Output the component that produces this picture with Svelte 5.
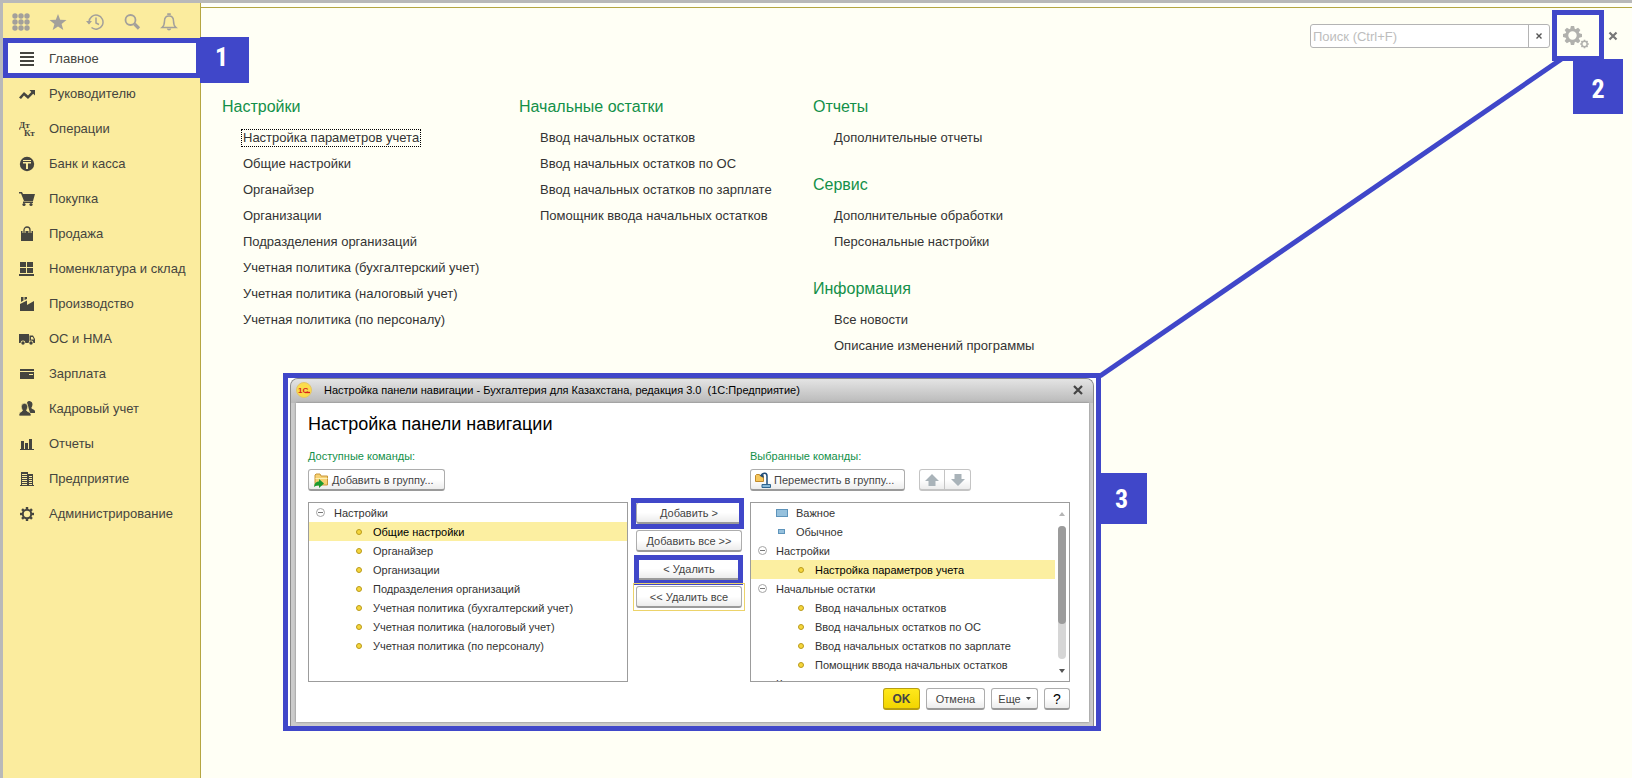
<script>
  const nav = [
    ['menu', 'Главное'],
    ['trend', 'Руководителю'],
    ['dtkt', 'Операции'],
    ['coin', 'Банк и касса'],
    ['cart', 'Покупка'],
    ['bag', 'Продажа'],
    ['boxes', 'Номенклатура и склад'],
    ['factory', 'Производство'],
    ['truck', 'ОС и НМА'],
    ['card', 'Зарплата'],
    ['people', 'Кадровый учет'],
    ['chart', 'Отчеты'],
    ['building', 'Предприятие'],
    ['gear', 'Администрирование']
  ];

  const columns = [
    [
      {
        title: 'Настройки',
        items: [
          'Настройка параметров учета',
          'Общие настройки',
          'Органайзер',
          'Организации',
          'Подразделения организаций',
          'Учетная политика (бухгалтерский учет)',
          'Учетная политика (налоговый учет)',
          'Учетная политика (по персоналу)'
        ]
      }
    ],
    [
      {
        title: 'Начальные остатки',
        items: [
          'Ввод начальных остатков',
          'Ввод начальных остатков по ОС',
          'Ввод начальных остатков по зарплате',
          'Помощник ввода начальных остатков'
        ]
      }
    ],
    [
      { title: 'Отчеты', items: ['Дополнительные отчеты'] },
      { title: 'Сервис', items: ['Дополнительные обработки', 'Персональные настройки'] },
      { title: 'Информация', items: ['Все новости', 'Описание изменений программы'] }
    ]
  ];

  const available = [
    { kind: 'group', text: 'Настройки' },
    { kind: 'item', text: 'Общие настройки', selected: true },
    { kind: 'item', text: 'Органайзер' },
    { kind: 'item', text: 'Организации' },
    { kind: 'item', text: 'Подразделения организаций' },
    { kind: 'item', text: 'Учетная политика (бухгалтерский учет)' },
    { kind: 'item', text: 'Учетная политика (налоговый учет)' },
    { kind: 'item', text: 'Учетная политика (по персоналу)' }
  ];

  const chosen = [
    { kind: 'large', text: 'Важное' },
    { kind: 'small', text: 'Обычное' },
    { kind: 'group', text: 'Настройки' },
    { kind: 'item', text: 'Настройка параметров учета', selected: true },
    { kind: 'group', text: 'Начальные остатки' },
    { kind: 'item', text: 'Ввод начальных остатков' },
    { kind: 'item', text: 'Ввод начальных остатков по ОС' },
    { kind: 'item', text: 'Ввод начальных остатков по зарплате' },
    { kind: 'item', text: 'Помощник ввода начальных остатков' },
    { kind: 'plain', text: 'К' }
  ];

  const dots = [3, 9, 15];
  const teeth = [0, 45, 90, 135, 180, 225, 270, 315];
</script>

{#snippet navIcon(name)}
  <svg width="16" height="16" viewBox="0 0 16 16" fill="currentColor" aria-hidden="true">
    {#if name === 'menu'}
      <path d="M1 1h14v2H1zM1 5h14v2H1zM1 9h14v2H1zM1 13h14v2H1z" />
    {:else if name === 'trend'}
      <path d="M0 11.500 5 6l4 3.500L12.300 6 10.500 4H16v5.500l-1.800-1.800L9 13 5 9.500 2 13z" />
    {:else if name === 'dtkt'}
      <text x="0" y="7" class="dt">Дт</text>
      <text x="5" y="15" class="dt">Кт</text>
    {:else if name === 'coin'}
      <circle cx="8" cy="8" r="7.200" />
      <path d="M4 4h8v1H4zM4 6h8v1.500H9V13H7V7.500H4z" fill="#fbec9e" />
    {:else if name === 'cart'}
      <path d="M0 1h3l1 2h12l-2 7H5L2 2.500H0z" />
      <path d="M4 10.500h10v1.500H4z" />
      <circle cx="5" cy="13.500" r="1.600" /><circle cx="12" cy="13.500" r="1.600" />
    {:else if name === 'bag'}
      <path d="M2 5h12v10H2z" />
      <path d="M5 7V4a3 3 0 0 1 6 0v3" fill="none" stroke="#fbec9e" stroke-width="3" />
      <path d="M5 7V4a3 3 0 0 1 6 0v3" fill="none" stroke="currentColor" stroke-width="1.300" />
    {:else if name === 'boxes'}
      <path d="M1 1h6v5H1zM8 1h6v5H8zM1 7h6v5H1zM8 7h6v5H8zM0 13h15v2H0z" />
    {:else if name === 'factory'}
      <path d="M1 15V8l7-3.500V9l7-4v10z" />
      <path d="M2 1h2.500v3.500L2 6zM5.500 1H8v2L5.500 4z" />
    {:else if name === 'truck'}
      <path d="M0 3h10v9H0zM10.500 4.500H14L16 8v4h-5.500z" />
      <path d="M12 6h1.700L15 8.500h-3z" fill="#fbec9e" />
      <circle cx="4" cy="12" r="2.400" fill="#fbec9e" /><circle cx="12" cy="12" r="2.400" fill="#fbec9e" />
      <circle cx="4" cy="12" r="1.700" /><circle cx="12" cy="12" r="1.700" />
    {:else if name === 'card'}
      <path d="M1 3h14v2H1zM1 6h14v7H1z" />
      <path d="M10 8h4v1h-4z" fill="#fbec9e" />
    {:else if name === 'people'}
      <path d="M8 1.500a3 3 0 0 1 5.500 1.500c0 2-.8 3-1.200 4 1 1.500 3.700 1.500 3.700 3.500v1.500h-5z" />
      <path d="M2.300 5.500a3.200 3.200 0 0 1 6.400 0c0 2-.9 3-1.200 4 1 1.500 4.500 1.500 4.500 4V15H0v-1.500c0-2.500 3-2.500 3.500-4-.3-1-1.200-2-1.200-4z" stroke="#fbec9e" stroke-width=".7" />
    {:else if name === 'chart'}
      <path d="M2 5h3v8H2zM6 7h3v6H6zM10 3h3v10h-3zM1 13h14v1H1z" />
    {:else if name === 'building'}
      <path d="M2 1h7v2h5v11h1v1H1v-1h1z" />
      <path d="M3 3.500h5M3 5.500h5M3 7.500h5M3 9.500h5M3 11.500h5M3 13.500h5M10 5.500h3M10 7.500h3M10 9.500h3M10 11.500h3M10 13.500h3" stroke="#fbec9e" stroke-width="1" />
    {:else}
      <circle cx="8" cy="8" r="4.200" fill="none" stroke="currentColor" stroke-width="2" />
      {#each teeth as a}
        <path d="M6.800 1h2.400v2.800H6.800z" transform="rotate({a} 8 8)" />
      {/each}
    {/if}
  </svg>
{/snippet}

{#snippet tree(rows)}
  {#each rows as row}
    <li class={['row', row.kind, row.selected && 'selected']}>
      {#if row.kind === 'group'}
        <button class="toggle" aria-label="Свернуть"><span></span></button>
      {:else if row.kind !== 'plain'}
        <i class="mark"></i>
      {/if}
      <span>{row.text}</span>
    </li>
  {/each}
{/snippet}

<div class="app">
  <aside>
    <div class="tools">
      <button aria-label="Меню">
        <svg width="18" height="18" viewBox="0 0 18 18" fill="currentColor">
          {#each dots as y}{#each dots as x}<circle cx={x} cy={y} r="2.700" />{/each}{/each}
        </svg>
      </button>
      <button aria-label="Избранное">
        <svg width="18" height="18" viewBox="0 0 18 18" fill="currentColor">
          <path d="M9 1l2.200 5.700 6.300.3-4.900 4 1.700 6L9 13.600 3.700 17l1.700-6L.5 7l6.300-.3z" />
        </svg>
      </button>
      <button aria-label="История">
        <svg width="18" height="18" viewBox="0 0 18 18" fill="none" stroke="currentColor" stroke-width="1.500">
          <path d="M3 10.500V9a7 7 0 1 1 2.500 5.500" /><path d="M10 4.500V10l3 1.500" />
          <path d="M0 8h6l-3 3.500z" fill="currentColor" stroke="none" />
        </svg>
      </button>
      <button aria-label="Поиск">
        <svg width="18" height="18" viewBox="0 0 18 18" fill="none" stroke="currentColor">
          <circle cx="7.500" cy="7" r="5" stroke-width="1.800" /><path d="M11.500 11l4.500 4.500" stroke-width="3.200" />
        </svg>
      </button>
      <button aria-label="Уведомления">
        <svg width="18" height="18" viewBox="0 0 18 18" fill="none" stroke="currentColor" stroke-width="1.500">
          <path d="M2 14.500h14c-2.500-2-2.500-4-2.500-6.500 0-3-1.500-5-4.500-5s-4.500 2-4.500 5c0 2.500 0 4.500-2.500 6.500z" />
          <path d="M8 2V1h2v1M7.500 15.500c.5 1.500 2.500 1.500 3 0" />
        </svg>
      </button>
    </div>
    <nav>
      {#each nav as [icon, label], i}
        <a href="#{icon}" class:active={i === 0}>{@render navIcon(icon)}<span>{label}</span></a>
      {/each}
    </nav>
    <div class="frame frame-nav"></div>
    <div class="badge badge-1">1</div>
  </aside>

  <main>
    <header>
      <div class="search">
        <input type="text" aria-label="Поиск" placeholder="Поиск (Ctrl+F)" />
        <button aria-label="Очистить">
          <svg width="8" height="8" viewBox="0 0 8 8"><path d="M1.500 1.500l5 5M6.500 1.500l-5 5" stroke="#555" stroke-width="1.400" /></svg>
        </button>
      </div>
      <div class="settings">
        <button aria-label="Настройка">
          <svg width="28" height="28" viewBox="0 0 28 28" fill="#b1b1ad">
            <circle cx="9.500" cy="10.500" r="5.600" fill="none" stroke="#b1b1ad" stroke-width="2.800" />
            {#each teeth as a}<path d="M7.900 1h3.200l.8 3.500h-4.800z" transform="rotate({a} 9.500 10.500)" />{/each}
            <circle cx="21.500" cy="19" r="2.700" fill="none" stroke="#b1b1ad" stroke-width="1.500" />
            {#each teeth as a}<path d="M20.700 14.700h1.600v1.500h-1.600z" transform="rotate({a} 21.500 19)" />{/each}
          </svg>
        </button>
        <div class="badge badge-2">2</div>
      </div>
      <button class="close" aria-label="Закрыть">
        <svg width="10" height="10" viewBox="0 0 10 10"><path d="M1.500 1.500l7 7M8.500 1.500l-7 7" stroke="#777" stroke-width="2.200" /></svg>
      </button>
    </header>

    <div class="columns">
      {#each columns as groups, c}
        <div class="column">
          {#each groups as g}
            <section>
              <h2>{g.title}</h2>
              <ul>
                {#each g.items as item, i}
                  <li><a href="#item" class:focused={c === 0 && i === 0}>{item}</a></li>
                {/each}
              </ul>
            </section>
          {/each}
        </div>
      {/each}
    </div>
  </main>

  <svg class="connector" width="480" height="330" viewBox="0 0 480 330" aria-hidden="true">
    <path d="M7 322 470 4" stroke="#4047c9" stroke-width="5" />
  </svg>

  <div class="window" role="dialog" aria-labelledby="win-title">
    <div class="shell">
      <div class="titlebar">
        <svg width="16" height="16" viewBox="0 0 16 16" aria-hidden="true">
          <circle cx="8" cy="8" r="7.500" fill="#fbdc4a" stroke="#e3c46a" />
          <text x="2" y="11" class="logo">1С</text>
          <path d="M9 10.500h5" stroke="#d8231c" stroke-width="1.300" />
        </svg>
        <span id="win-title">Настройка панели навигации - Бухгалтерия для Казахстана, редакция 3.0&nbsp; (1С:Предприятие)</span>
        <button class="close" aria-label="Закрыть окно">
          <svg width="12" height="12" viewBox="0 0 12 12"><path d="M2 2l8 8M10 2l-8 8" stroke="#444" stroke-width="2.200" /></svg>
        </button>
      </div>
      <div class="body">
        <h1>Настройка панели навигации</h1>
        <div class="panes">
          <div class="pane">
            <h3>Доступные команды:</h3>
            <div class="bar">
              <button class="btn icon">
                <svg width="16" height="16" viewBox="0 0 16 16">
                  <path d="M2 13V3l1-1h4l1 2h6.500v9z" fill="#f6d173" stroke="#c7963a" />
                  <path d="M2.500 6.500h12" stroke="#fff0b5" />
                  <path d="M1 15c.5-4 2.500-5.500 5-5.500V7l5 4.500L6 16v-2.500c-2 0-3.500 0-5 1.500z" fill="#199a2e" />
                </svg>Добавить в группу...</button>
            </div>
            <ul class="list">{@render tree(available)}</ul>
          </div>
          <div class="moves">
            <div class="move"><button class="btn">Добавить &gt;</button><i class="frame"></i></div>
            <div class="move"><button class="btn">Добавить все &gt;&gt;</button></div>
            <div class="move"><button class="btn">&lt; Удалить</button><i class="frame tight"></i></div>
            <div class="move"><button class="btn">&lt;&lt; Удалить все</button><i class="halo"></i></div>
          </div>
          <div class="pane">
            <h3>Выбранные команды:</h3>
            <div class="bar">
              <button class="btn icon">
                <svg width="16" height="16" viewBox="0 0 16 16">
                  <path d="M.5 9.500v-6l1-1h3l1 1.500h3v5.500z" fill="#f6c75c" stroke="#c08a2c" />
                  <path d="M6 3.500C8 .5 12 .5 12 4v8" fill="none" stroke="#1f4c77" stroke-width="1.500" />
                  <path d="M4.500 3.500 8.500 2v4z" fill="#1f4c77" />
                  <path d="M7 12.500h8.500v3H7z" fill="#86b7d8" stroke="#2e6590" />
                </svg>Переместить в группу...</button>
              <span class="pair">
                <button class="btn" disabled aria-label="Вверх"><svg width="14" height="12" viewBox="0 0 14 12"><path d="M7 0l7 7h-3.500v5h-7V7H0z" fill="#a9b3b9" /></svg></button>
                <button class="btn" disabled aria-label="Вниз"><svg width="14" height="12" viewBox="0 0 14 12"><path d="M7 12l7-7h-3.500V0h-7v5H0z" fill="#a9b3b9" /></svg></button>
              </span>
            </div>
            <div class="list scrolled">
              <ul>{@render tree(chosen)}</ul>
              <div class="scroll" aria-hidden="true">
                <svg width="6" height="4" viewBox="0 0 6 4"><path d="M0 4l3-4 3 4z" fill="#b5b5b5" /></svg>
                <div class="track"><div class="thumb"></div></div>
                <svg width="6" height="4" viewBox="0 0 6 4"><path d="M0 0l3 4 3-4z" fill="#555" /></svg>
              </div>
            </div>
          </div>
        </div>
        <footer>
          <button class="btn ok">OK</button>
          <button class="btn cancel">Отмена</button>
          <button class="btn more">Еще <svg width="5" height="3" viewBox="0 0 5 3"><path d="M0 0h5L2.500 3z" fill="#444" /></svg></button>
          <button class="btn help">?</button>
        </footer>
      </div>
    </div>
    <div class="badge badge-3">3</div>
  </div>
</div>

<style>
  :global(body) { background: #fffff5; }
  * { box-sizing: border-box; }
  .app {
    --blue: #4047c9;
    position: relative;
    display: flex;
    min-height: 100vh;
    border-top: 3px solid #b9b9b9;
    border-left: 3px solid #b9b9b9;
    background: #fffff5;
    font: 13px/16px "Liberation Sans", Arial, sans-serif;
    color: #333;
    overflow: hidden;
  }
  button { font: inherit; color: inherit; margin: 0; padding: 0; border: 0; background: none; }
  ul { list-style: none; margin: 0; padding: 0; }
  h1, h2, h3 { margin: 0; font-weight: 400; }
  a { color: inherit; text-decoration: none; }
  svg { display: block; flex: none; }

  aside { position: relative; flex: none; width: 198px; background: #fbec9e; border-right: 1px solid #b5a642; }
  .tools { display: flex; gap: 19px; height: 38px; padding-left: 9px; align-items: center; color: #a3a09b; }
  nav a { display: flex; align-items: center; gap: 14px; height: 35px; padding-left: 16px; color: #45453f; white-space: nowrap; }
  nav a.active { background: #fffff8; }
  .dt { font: bold 9px "Liberation Serif", serif; }
  .frame { position: absolute; border: 5px solid var(--blue); }
  .frame-nav { left: 0; right: -1px; top: 35px; height: 40px; }
  .badge {
    position: absolute;
    background: var(--blue);
    color: #fff;
    font: bold 26px/1 "Liberation Sans Narrow", "Roboto Condensed", "Liberation Sans", sans-serif;
    display: flex;
    align-items: center;
    justify-content: center;
  }
  .badge-1 { left: 197px; top: 34px; width: 49px; height: 46px; padding: 0 6px 6px 0; }
  .badge-2 { left: 21px; top: 49px; width: 50px; height: 55px; padding-top: 4px; }
  .badge-3 { left: 100%; top: 95px; width: 51px; height: 51px; }

  main { flex: 1; min-width: 0; border-top: 4px solid #fffff8; }
  header { display: flex; align-items: flex-start; justify-content: flex-end; height: 87px; border-top: 1px solid #b5a642; padding: 2px 14px 0 0; }
  .search { display: flex; width: 240px; height: 24px; margin: 14px 2px 0 0; border: 1px solid #b4b4b4; border-radius: 3px; background: #fff; }
  .search input { flex: 1; min-width: 0; border: 0; padding: 0 2px; background: none; outline: 0; font: 13px "Liberation Sans", Arial, sans-serif; }
  .search input::placeholder { color: #bdbdbd; opacity: 1; }
  .search button { width: 21px; border-left: 1px solid #b4b4b4; display: flex; align-items: center; justify-content: center; }
  .settings { position: relative; width: 52px; height: 51px; }
  .settings > button { width: 100%; height: 100%; border: 5px solid var(--blue); padding: 6px 0 0 6px; }
  header .close { margin: 21px 0 0 4px; }

  .columns { display: grid; grid-template-columns: 297px 294px 1fr; padding-left: 21px; }
  section { margin-bottom: 21px; }
  h2 { font-size: 16px; line-height: 26px; color: #139049; margin-bottom: 5px; }
  section li { height: 26px; padding-left: 19px; display: flex; align-items: center; white-space: nowrap; }
  section a { padding: 0 1px; border: 1px solid transparent; }
  section a.focused { border: 1px dotted #000; }

  .connector { position: absolute; left: 1090px; top: 51px; }
  .window {
    position: absolute;
    left: 280px;
    top: 370px;
    width: 818px;
    border: 5px solid var(--blue);
    background: #fff;
    font: 11px/14px "Liberation Sans", Arial, sans-serif;
  }
  .shell { margin: 0 2px; padding: 0 4px 4px 5px; border: 1px solid #8a8a8a; border-bottom: 0; border-radius: 8px 8px 0 0; background: #cbcbcb; }
  .titlebar { display: flex; align-items: center; height: 24px; margin: 0 -4px 0 -5px; padding: 0 9px 2px 5px; border-radius: 7px 7px 0 0; background: linear-gradient(#e4e4e4, #b9b9b9); color: #000; }
  .titlebar span { flex: 1; margin-left: 12px; }
  .logo { font: bold 8px "Liberation Sans", sans-serif; fill: #d8231c; }
  .body { background: #fff; padding: 10px 19px 12px 12px; box-shadow: 0 0 2px #777; }
  h1 { font-size: 18px; line-height: 22px; color: #000; }
  .panes { display: flex; justify-content: space-between; margin-top: 14px; }
  .pane { width: 320px; }
  h3 { font-size: 11px; line-height: 14px; color: #139049; }
  .bar { display: flex; gap: 14px; margin: 6px 0 11px; }
  .btn {
    display: flex;
    align-items: center;
    justify-content: center;
    height: 22px;
    border: 1px solid #adadad;
    border-bottom: 2px solid #9a9a9a;
    border-radius: 3px;
    background: linear-gradient(#fff 50%, #ececec);
    color: #444;
    white-space: nowrap;
  }
  .btn.icon { padding: 0 10px 0 4px; gap: 3px; }
  .pair { display: flex; }
  .pair .btn { width: 26px; border-color: #c4c4c4; }
  .pair .btn:first-child { border-radius: 3px 0 0 3px; }
  .pair .btn:last-child { border-left: 0; border-radius: 0 3px 3px 0; }
  .list { height: 180px; border: 1px solid #9c9c9c; overflow: hidden; background: #fff; }
  .row { display: flex; align-items: center; height: 19px; white-space: nowrap; }
  .row.plain { padding-left: 25px; }
  .row.selected { background: #fcefa1; color: #000; }
  .toggle { flex: none; width: 9px; height: 9px; margin: 0 9px 0 7px; border: 1px solid #a5a5a5; border-radius: 50%; display: flex; align-items: center; justify-content: center; }
  .toggle span { width: 5px; height: 1px; background: #777; }
  .mark { flex: none; border: 1px solid #b99a1c; background: #f6d63c; }
  .item .mark { width: 6px; height: 6px; border-radius: 50%; margin: 0 11px 0 47px; }
  .large .mark { width: 12px; height: 8px; margin: 0 8px 0 25px; border-color: #5e94bb; background: #96c1dd; }
  .small .mark { width: 7px; height: 5px; margin: 0 11px 0 27px; border-color: #5e94bb; background: #96c1dd; }
  .scrolled { display: flex; }
  .scrolled ul { flex: 1; }
  .scroll { width: 14px; display: flex; flex-direction: column; align-items: center; padding: 9px 0 8px; gap: 10px; }
  .track { flex: 1; width: 8px; border-radius: 4px; background: #d6d6d6; }
  .thumb { height: 74%; border-radius: 4px; background: #9b9b9b; }

  .moves { display: flex; flex-direction: column; gap: 6px; width: 106px; padding-top: 53px; }
  .move { position: relative; }
  .move .btn { width: 100%; }
  .move .frame { inset: -4px -2px -5px -5px; }
  .move .tight { inset: -3px -1px -5px -2px; }
  .halo { position: absolute; inset: -3px; border: 1px solid #ecd36a; }

  footer { display: flex; justify-content: flex-end; gap: 6px; margin-top: 6px; }
  .ok { width: 37px; border-color: #b79d12; background: linear-gradient(#ffe81c, #f2d500); font-weight: 700; font-size: 12px; }
  .cancel { width: 59px; }
  .more { width: 47px; gap: 5px; }
  .help { width: 26px; font-size: 14px; color: #000; }
</style>
